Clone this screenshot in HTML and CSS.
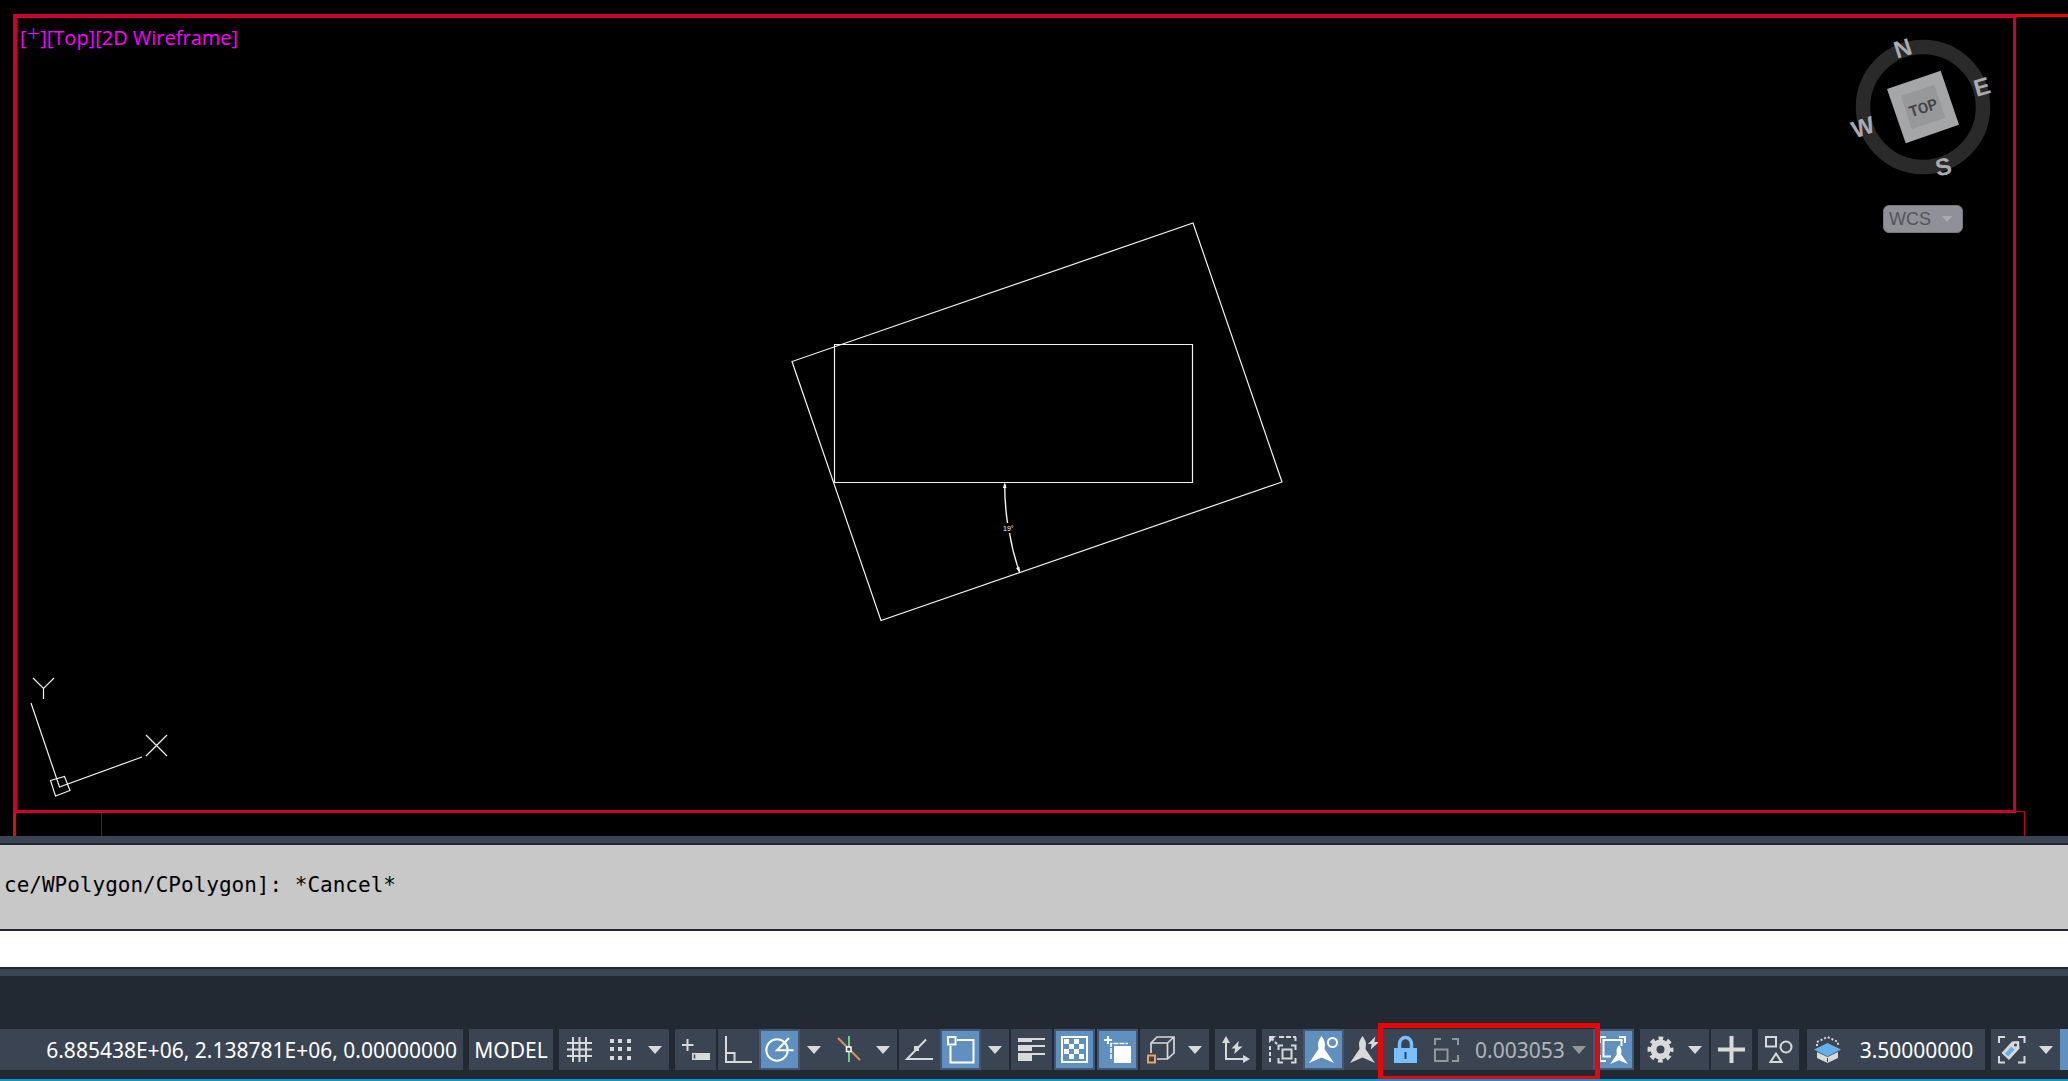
FILE: index.html
```html
<!DOCTYPE html>
<html lang="en">
<head>
<meta charset="utf-8">
<title>Drawing layout</title>
<link rel="stylesheet" href="styles.css">
</head>
<body>
<svg class="defs" aria-hidden="true">
  <symbol id="caret" viewBox="0 0 14 8"><path d="M0 0H14L7 8Z" fill="currentColor"/></symbol>
  <symbol id="bolt" viewBox="0 0 12 14"><path d="M8 0L0 8H4L3 14L12 6H7Z" fill="currentColor"/></symbol>
  <symbol id="star" viewBox="0 0 25 27"><path d="M12.500 0C14 2 16 5 16 8L15.500 13L25 27L12.500 21.500L0 27L9.500 13L9 8C9 5 11 2 12.500 0Z" fill="currentColor"/></symbol>
</svg>

<main class="canvas">
  <section class="viewport" aria-label="Viewport">
    <div class="view-controls">
      <button>[<span class="raised">+</span>]</button><button>[Top]</button><button>[2D Wireframe]</button>
    </div>
    <div class="navigator">
      <svg class="compass" width="154" height="146" viewBox="-4 0 154 146" role="img" aria-label="View cube">
        <circle cx="73" cy="73" r="60" fill="none" stroke="#2a2a2a" stroke-width="14.500"/>
        <path d="M90.700 36.700L109 90.700L55.700 109.300L37 55Z" fill="#a5a6a8"/>
        <path d="M84.300 50.700L95.300 83.700L61.700 95.300L51 61.700Z" fill="#97989a"/>
        <text class="cube-face" transform="translate(73 73) rotate(-18)" y="6">TOP</text>
        <text class="cube-dir" transform="translate(52.700 14.500) rotate(-18)" y="8">N</text>
        <text class="cube-dir" transform="translate(132 53) rotate(-16)" y="8">E</text>
        <text class="cube-dir" transform="translate(93.500 133) rotate(-12)" y="8">S</text>
        <text class="cube-dir" transform="translate(13 93.500) rotate(-18)" y="8">W</text>
      </svg>
      <label class="wcs">
        <select aria-label="Coordinate system"><option>WCS</option></select>
        <svg class="caret" width="12" height="6"><use href="#caret"/></svg>
      </label>
    </div>
  </section>
  <svg class="linework" viewBox="0 0 2068 836" preserveAspectRatio="xMinYMin slice" aria-hidden="true">
    <g fill="none" stroke="#f2f2f2" stroke-width="1.200">
      <path d="M1193 223L1282 482L881 620.500L792 361.500Z"/>
      <path d="M834.500 344.500H1192.500V482.500H834.500Z"/>
      <path stroke-width="1.400" d="M1004.700 484Q1004.700 504 1007.500 523M1009.500 533Q1013 554 1019.500 572"/>
      <path d="M33 678L43.500 688.500L54 678M43.500 688.500V699M146 735L167 756M167 735L146 756"/>
      <path d="M31 703L59.500 787L142 757M50.500 780.500L64.500 776.500L70 790.500L55.500 796Z"/>
    </g>
    <path fill="#fff" d="M1004.700 482L1006.500 488H1003ZM1020 573L1016 568L1019.500 567Z"/>
    <text class="dimension" x="1003" y="531">19°</text>
  </svg>
  <i class="sheet-top"></i>
  <i class="sheet-left"></i>
  <i class="sheet-inner"></i>
  <i class="sheet-right"></i>
</main>

<section class="command" aria-label="Command line">
  <div class="splitter"></div>
  <output class="history">ce/WPolygon/CPolygon]: *Cancel*</output>
  <input class="prompt" type="text" aria-label="Command">
  <div class="splitter bottom"></div>
</section>

<footer class="status">
  <div class="group coords"><output>6.885438E+06, 2.138781E+06, 0.00000000</output></div>
  <div class="group"><button class="model">MODEL</button></div>

  <div class="group">
    <button class="tool" aria-label="Grid"><svg viewBox="0 0 41 41"><path d="M14 8V33M20.500 8V33M27 8V33M8 14H33M8 20.500H33M8 27H33"/></svg></button>
    <button class="tool" aria-label="Snap"><svg viewBox="0 0 41 41"><path class="fill" d="M10 10h4v4h-4zM18 10h4v4h-4zM27 10h4v4h-4zM10 18h4v4h-4zM18 18h4v4h-4zM27 18h4v4h-4zM10 27h4v4h-4zM18 27h4v4h-4zM27 27h4v4h-4z"/></svg></button>
    <button class="drop" aria-label="Snap options"><svg class="caret"><use href="#caret"/></svg></button>
  </div>

  <div class="group">
    <button class="tool" aria-label="Dynamic input"><svg viewBox="0 0 41 41"><path d="M12.500 10V22M7 16H18.500"/><path class="fill" d="M17 24H35V31H17Z"/><path d="M19.500 25.500V29.500" stroke="#3b4453" stroke-width="1.500"/></svg></button>
  </div>

  <div class="group tight">
    <button class="tool" aria-label="Ortho"><svg viewBox="0 0 41 41"><path d="M8 7V33H34M8 24H16.500V33"/></svg></button>
    <button class="tool on" aria-label="Polar tracking"><svg viewBox="0 0 41 41"><circle cx="18" cy="21" r="10.700"/><path d="M30 9L18 21.300H34.500"/></svg></button>
    <button class="drop" aria-label="Polar options"><svg class="caret"><use href="#caret"/></svg></button>
    <button class="tool" aria-label="Isometric drafting"><svg viewBox="0 0 41 41"><path d="M10 9L32 31" stroke="#d8935c"/><path d="M21 7V33" stroke="#5fd48a"/><path d="M18.500 18h4.500v4.500h-4.500z" fill="#3b4453" stroke="#fff" stroke-width="1.500"/></svg></button>
    <button class="drop" aria-label="Isometric options"><svg class="caret"><use href="#caret"/></svg></button>
  </div>

  <div class="group tight">
    <button class="tool" aria-label="Object snap tracking"><svg viewBox="0 0 41 41"><path d="M34 30H8L27 10.500"/><path class="fill" d="M15 17h5v5h-5z"/></svg></button>
    <button class="tool on" aria-label="Object snap"><svg viewBox="0 0 41 41"><path d="M8 8h7.500v7.500H8zM17 11H33.500V33.500H10.500V17"/></svg></button>
    <button class="drop" aria-label="Object snap options"><svg class="caret"><use href="#caret"/></svg></button>
  </div>

  <div class="group tight">
    <button class="tool" aria-label="Lineweight"><svg viewBox="0 0 41 41"><path class="fill" d="M7 9H34V11H21V13H7ZM7 16H34V18H21V22H7ZM7 24H34V26H21V32H7Z"/></svg></button>
  </div>
  <div class="group tight">
    <button class="tool on" aria-label="Transparency"><svg viewBox="0 0 41 41"><path d="M8 8H33V33H8Z"/><path class="fill" d="M10 10h5v5h-5zM20 10h5v5h-5zM15 15h5v5h-5zM25 15h5v5h-5zM10 20h5v5h-5zM20 20h5v5h-5zM15 25h5v5h-5zM25 25h5v5h-5z"/></svg></button>
  </div>
  <div class="group tight">
    <button class="tool on" aria-label="Selection cycling"><svg viewBox="0 0 41 41"><path d="M11 7V15M7 11H15"/><path d="M14 30V14.500H31" stroke-dasharray="5 1" stroke-width="1.500"/><path class="fill" d="M17 17H34V34H17Z"/></svg></button>
  </div>
  <div class="group tight">
    <button class="tool" aria-label="3D object snap"><svg viewBox="0 0 41 41"><path stroke-width="1.700" d="M11 24V14L17 8H34V24L27.500 30H17M11 14H27.500V30M27.500 14L34 8"/><path d="M8 26.500h7v7H8z" stroke="#e8a464"/></svg></button>
    <button class="drop" aria-label="3D object snap options"><svg class="caret"><use href="#caret"/></svg></button>
  </div>

  <div class="group">
    <button class="tool" aria-label="Dynamic UCS"><svg viewBox="0 0 41 41"><path d="M11 12V30H30"/><path class="fill" d="M11 7L15 14H7ZM35 30L28 34V26Z"/><use href="#bolt" x="16" y="12" width="12" height="13"/></svg></button>
  </div>

  <div class="group">
    <button class="tool" aria-label="Selection filtering"><svg viewBox="0 0 41 41"><path d="M8 8L15 15M17 8H34" stroke-dasharray="5 2"/><path d="M33.500 8V13M8 17V34" stroke-dasharray="4 2"/><path class="fill" d="M7 7H14L7 14Z"/><path d="M16.500 21V16.500H21M29 16.500H33.500V21M33.500 29V33.500H29M21 33.500H16.500V29M20.500 20.500H29.500V29.500H20.500Z"/></svg></button>
    <button class="tool on" aria-label="Annotation visibility"><svg viewBox="0 0 41 41"><use href="#star" x="6" y="7" width="25" height="27"/><circle cx="29.500" cy="13.500" r="4.500"/></svg></button>
    <button class="tool" aria-label="Auto scale"><svg viewBox="0 0 41 41"><use href="#star" x="6" y="7" width="25" height="27"/><use href="#bolt" x="24" y="7" width="11" height="14"/></svg></button>
    <div class="callout">
      <button class="tool lock" aria-label="Viewport lock"><svg viewBox="0 0 41 41"><path d="M14.500 20V15A6 6.500 0 0 1 26.500 15V20" stroke-width="3.500"/><path fill="currentColor" stroke="none" fill-rule="evenodd" d="M9 19H32V34H9ZM19.500 23V30H21.500V23Z"/></svg></button>
      <label class="scale">
        <svg class="scale-icon" viewBox="0 0 41 41"><path d="M9 16V10H15M26 10H32V16M32 26V32H26M9 20.500H21.500V32H9Z"/></svg>
        <select aria-label="Viewport scale"><option>0.003053</option></select>
        <svg class="caret"><use href="#caret"/></svg>
      </label>
    </div>
    <button class="tool on" aria-label="Annotation monitor"><svg viewBox="0 0 41 41"><path d="M7 14V8H13M26 8H32V14M7 26V32H13M18 27.500H10.500V11H28.500V17"/><use href="#star" x="17" y="16" width="18" height="19"/></svg></button>
  </div>

  <div class="group">
    <button class="tool" aria-label="Workspace"><svg viewBox="0 0 41 41"><circle cx="20.500" cy="20.500" r="7" stroke-width="6"/><circle cx="20.500" cy="20.500" r="11" stroke-width="4" stroke-dasharray="4.600 4.040" stroke-dashoffset="2.300"/></svg></button>
    <button class="drop" aria-label="Workspace options"><svg class="caret"><use href="#caret"/></svg></button>
  </div>
  <div class="group tight">
    <button class="tool" aria-label="Add"><svg viewBox="0 0 41 41"><path d="M20.500 7V34M7 20.500H34" stroke-width="4"/></svg></button>
  </div>
  <div class="group">
    <button class="tool" aria-label="Isolate objects"><svg viewBox="0 0 41 41"><path d="M8 8H18V17.500H8ZM18 24.500L23.500 33H12.500Z"/><circle cx="28" cy="18" r="5.500"/></svg></button>
  </div>
  <div class="group elevation">
    <button class="tool" aria-label="Elevation"><svg viewBox="0 0 41 41"><path d="M10 17V13L20.500 8L31 13V17" stroke-dasharray="2 2"/><path class="fill" d="M10 23L20.500 28L31 23V29L20.500 34L10 29Z"/><path d="M7 20.500L20.500 14L34 20.500L20.500 27.500Z" fill="#64b0ea" stroke="none"/><path d="M20.500 29V33" stroke="#3b4453" stroke-width="1"/></svg></button>
    <button class="elevation-value">3.50000000</button>
  </div>
  <div class="group">
    <button class="tool" aria-label="Annotation tag"><svg viewBox="0 0 41 41"><path d="M8 14V8H14M27 8H33.500V14M33.500 27V33.500H27M14 33.500H8V27"/><path class="fill" fill-rule="evenodd" d="M21 12.500L28 12L28.500 19.500L18 31L10.500 24ZM24.500 14.500A1.500 1.500 0 1 0 24.500 17.500A1.500 1.500 0 1 0 24.500 14.500Z"/><path d="M15.500 26L22 19" stroke="#64b0ea" stroke-width="4.500"/></svg></button>
    <button class="drop" aria-label="Tag options"><svg class="caret"><use href="#caret"/></svg></button>
    <span class="next-tool"></span>
  </div>
</footer>
</body>
</html>
```
FILE: styles.css
```css
* { box-sizing: border-box; }

body {
  margin: 0;
  height: 100vh;
  display: flex;
  flex-direction: column;
  overflow: hidden;
  background: #222933;
  font-family: "Noto Sans", "Open Sans", sans-serif;
  font-size: 21px;
  color: #fff;
}

button, select, input {
  margin: 0;
  padding: 0;
  border: 0;
  border-radius: 0;
  background: none;
  color: inherit;
  font: inherit;
  outline: 0;
}

select { appearance: none; }

.defs { position: absolute; width: 0; height: 0; }

/* Drawing area */
.canvas {
  position: relative;
  flex: 1;
  min-height: 0;
  display: flex;
  padding: 14px 52px 23px 13px;
  overflow: hidden;
  background: #000;
}

.viewport {
  flex: 1;
  display: flex;
  justify-content: space-between;
  align-items: flex-start;
  border: 3px solid #cc0033;
  border-top-width: 4px;
  border-left-width: 4px;
}

.view-controls {
  padding: 6px 3px;
  display: flex;
  font-family: "Open Sans", "Noto Sans", sans-serif;
  font-size: 20px;
  color: #ff00ff;
  line-height: 28px;
}

.raised {
  position: relative;
  top: -3px;
  font-size: 24px;
  font-weight: 300;
  line-height: 0;
}

.navigator {
  display: flex;
  flex-direction: column;
  align-items: center;
  gap: 25px;
  padding: 16px 13px 0 0;
}

.cube-face, .cube-dir {
  font-weight: 700;
  text-anchor: middle;
}

.cube-face { font-family: Roboto, sans-serif; font-size: 15px; fill: #45464c; }
.cube-dir { font-family: "Liberation Sans", sans-serif; font-size: 24px; fill: #a9abaf; }

.wcs {
  display: flex;
  align-items: center;
  justify-content: space-between;
  width: 80px;
  height: 28px;
  padding: 0 9px 0 5px;
  border: 1px solid #777882;
  border-radius: 6px;
  background: #8f9098;
}

.wcs select {
  font-family: "Liberation Sans", sans-serif;
  font-size: 18px;
  color: #54555c;
}

.wcs .caret { width: 12px; height: 6px; color: #a9aab0; }

.linework {
  position: absolute;
  inset: 0;
  width: 100%;
  height: 100%;
  pointer-events: none;
}

.dimension {
  font-family: "Liberation Sans", sans-serif;
  font-size: 7px;
  fill: #fff;
}

/* Lines of the sheet behind the viewport */
.sheet-top, .sheet-left, .sheet-inner, .sheet-right { position: absolute; }
.sheet-top { top: 14px; right: 0; width: 52px; height: 3px; background: #e80808; }
.sheet-left { left: 13px; bottom: 0; width: 3px; height: 23px; background: #e80808; }
.sheet-inner { left: 101px; bottom: 0; width: 1px; height: 23px; background: #a0001c; }
.sheet-right {
  right: 43px;
  bottom: 0;
  width: 9px;
  height: 25px;
  border: solid #c00020;
  border-width: 1px 1px 0 0;
}

/* Command line */
.command { display: flex; flex-direction: column; }

.splitter {
  height: 9px;
  background: #3b4453;
  border-bottom: 2px solid #222933;
}

.splitter.bottom {
  border-top: 2px solid #222933;
  border-bottom: 0;
}

.history {
  height: 84px;
  padding: 0 4px;
  background: #c8c8c8;
  color: #000;
  font-family: "DejaVu Sans Mono", monospace;
  font-size: 21px;
  line-height: 80px;
  white-space: pre;
}

.prompt {
  height: 38px;
  padding: 0 4px;
  border-top: 2px solid #222933;
  background: #fff;
  color: #000;
  font-family: "DejaVu Sans Mono", monospace;
}

/* Status bar */
.status {
  display: flex;
  gap: 6px;
  height: 105px;
  padding: 53px 0 9px;
  border-bottom: 2px solid #0a96d2;
  overflow: hidden;
}

.group {
  display: flex;
  flex: none;
  height: 41px;
  background: #3b4453;
}

.group.tight { margin-left: -4px; }

.coords {
  flex: 1;
  justify-content: flex-end;
  align-items: center;
  padding-right: 6px;
  white-space: nowrap;
}

.model { width: 84px; }

.tool {
  width: 41px;
  height: 41px;
  display: flex;
  color: #d9d9d9;
}

.tool svg, .scale-icon {
  width: 41px;
  height: 41px;
  flex: none;
  fill: none;
  stroke: currentColor;
  stroke-width: 2;
}

.tool svg .fill { fill: currentColor; stroke: none; }
.tool use { stroke: none; }

.tool.on {
  color: #fff;
  background: #6090c0;
  border: 2px solid #435672;
}

.tool.on svg { margin: -2px; }

.drop {
  width: 28px;
  display: flex;
  align-items: center;
  justify-content: center;
  color: #d9d9d9;
}

.caret { width: 14px; height: 8px; flex: none; }

.tool.lock { color: #78c0ff; }

.callout { position: relative; display: flex; }

.callout::after {
  content: "";
  position: absolute;
  inset: -6px -7px -11px;
  border: 5px solid #eb0606;
  pointer-events: none;
}

.scale {
  display: flex;
  align-items: center;
  width: 167px;
  color: #969696;
}

.scale select {
  flex: 1;
  padding-left: 8px;
  color: #b0b4b9;
}

.scale .caret { margin-right: 7px; }

.elevation { margin-left: 2px; }
.elevation-value { width: 137px; }

.next-tool { width: 8px; background: #6090c0; }
```
